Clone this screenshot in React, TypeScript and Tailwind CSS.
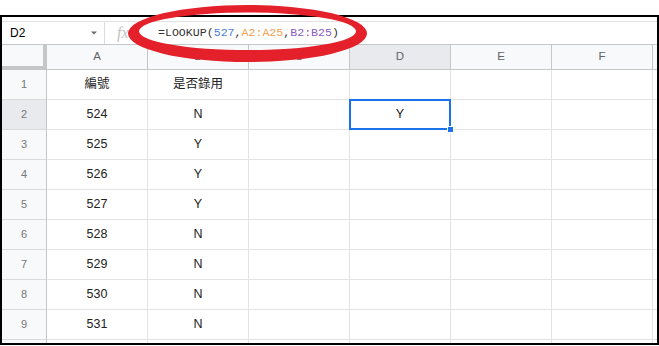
import React from "react";

const cols = ["A", "B", "C", "D", "E", "F"];

const rows: [string, string][] = [
  ["編號", "是否錄用"],
  ["524", "N"],
  ["525", "Y"],
  ["526", "Y"],
  ["527", "Y"],
  ["528", "N"],
  ["529", "N"],
  ["530", "N"],
  ["531", "N"],
  ["", ""],
];

const font = {
  fontFamily: '"Liberation Sans", "Noto Sans CJK TC", Arial, sans-serif',
};

function FormulaBar() {
  return (
    <div className="h-[24px] shrink-0 flex border-t border-b border-t-[#e1e1e1] border-b-[#c7c7c7] bg-white">
      <div className="w-[103px] flex items-center justify-between pl-[8px] pr-[7px] border-r border-[#dadce0]">
        <span className="text-[12px] text-black leading-none">D2</span>
        <svg width="6" height="4" viewBox="0 0 6 4">
          <path d="M0 0.5h6L3 3.5z" fill="#6b6b6b" />
        </svg>
      </div>
      <div className="flex items-center pl-[12px] w-[53px]">
        <span
          className="italic text-[16px] text-[#c2c2c2] leading-none"
          style={{ fontFamily: '"Liberation Serif", serif' }}
        >
          fx
        </span>
      </div>
      <div
        className="flex items-center text-[11.6px] text-[#333] whitespace-pre"
        style={{ fontFamily: '"Liberation Mono", monospace' }}
      >
        <span>=LOOKUP(</span>
        <span className="text-[#4a7fd6]">527</span>
        <span>,</span>
        <span className="text-[#f0a050]">A2:A25</span>
        <span>,</span>
        <span className="text-[#8a5cc2]">B2:B25</span>
        <span>)</span>
      </div>
    </div>
  );
}

function HeaderRow() {
  return (
    <div className="h-[25px] shrink-0 flex">
      <div className="w-[45px] shrink-0 bg-[#f8f9fa] border-r-4 border-b-4 border-[#c4c7c5]" />
      {cols.map((c) => (
        <div
          key={c}
          className={
            "w-[101px] shrink-0 flex items-center justify-center border-r border-b border-[#c4c7c5] text-[11.5px] text-[#5f6368] " +
            (c === "D" ? "bg-[#e8eaed]" : "bg-[#f8f9fa]")
          }
        >
          {c}
        </div>
      ))}
      <div className="flex-1 bg-[#f8f9fa] border-b border-[#c4c7c5]" />
    </div>
  );
}

function Row({ n, a, b }: { n: number; a: string; b: string }) {
  const sel = n === 2;
  return (
    <div className="h-[30px] flex shrink-0">
      <div
        className={
          "w-[45px] shrink-0 flex items-center justify-center border-r border-b border-r-[#c4c7c5] border-b-[#dadada] text-[11px] text-[#777] " +
          (sel ? "bg-[#e8eaed]" : "bg-[#f8f9fa]")
        }
      >
        {n < 10 ? n : ""}
      </div>
      {cols.map((c) => (
        <div
          key={c}
          className={
            "w-[101px] shrink-0 relative flex items-center justify-center border-r border-b border-[#e2e3e3] text-[12.5px] text-[#222]" +
            (sel && c === "D" ? " z-10" : "")
          }
        >
          {c === "A" ? a : c === "B" ? b : sel && c === "D" ? "Y" : ""}
          {sel && c === "D" && (
            <>
              <div className="absolute -inset-px border-2 border-[#1a73e8]" />
              <div className="absolute -right-[4px] -bottom-[4px] w-[7px] h-[7px] bg-[#1a73e8] border border-white" />
            </>
          )}
        </div>
      ))}
      <div className="flex-1 border-b border-[#e2e3e3]" />
    </div>
  );
}

export default function App() {
  return (
    <div className="w-[659px] h-[346px] bg-white relative overflow-hidden" style={font}>
      <div className="mt-[15px] h-[330px] border-2 border-black overflow-hidden flex flex-col">
        <div className="h-[4px] shrink-0" />
        <FormulaBar />
        <HeaderRow />
        {rows.map(([a, b], i) => (
          <Row key={i} n={i + 1} a={a} b={b} />
        ))}
      </div>
      <svg
        className="absolute left-0 top-0 pointer-events-none"
        width="659"
        height="80"
        viewBox="0 0 659 80"
      >
        <path
          fillRule="evenodd"
          fill="#e4212b"
          d="M128 33.5a119.5 28.5 0 1 0 239 0a119.5 28.5 0 1 0 -239 0z M139 31.3a108.5 18.8 0 1 0 217 0a108.5 18.8 0 1 0 -217 0z"
        />
      </svg>
    </div>
  );
}
